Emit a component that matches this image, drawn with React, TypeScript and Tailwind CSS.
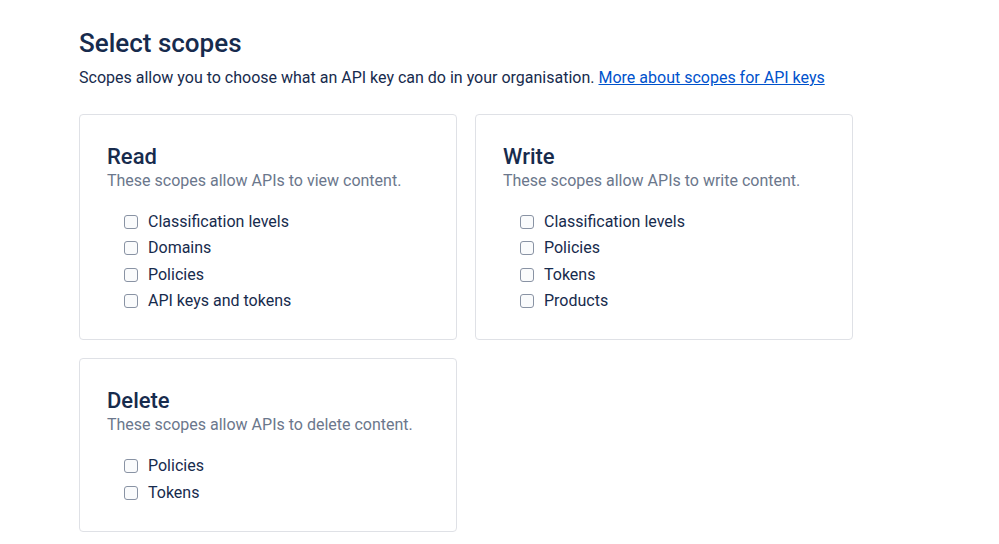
const read = ["Classification levels", "Domains", "Policies", "API keys and tokens"];
const write = ["Classification levels", "Policies", "Tokens", "Products"];
const del = ["Policies", "Tokens"];

function ScopeCard({ title, hint, items }: { title: string; hint: string; items: string[] }) {
  return (
    <div className="rounded-[4px] border border-[#dfe1e6] bg-white pl-[27px] pr-7 pt-7 pb-[25px]">
      <h2 className="text-[22px] leading-[28px] font-medium text-[#172b4d]">{title}</h2>
      <p className="text-[16px] leading-[20px] text-[#6b778c]">{hint}</p>
      <div className="mt-[18px] pl-[17px]">
        {items.map((item) => (
          <label key={item} className="flex h-[26.3px] items-center gap-[10px] text-[16px] text-[#172b4d]">
            <span className="h-[14px] w-[14px] rounded-[3px] border-[1.5px] border-[#8993a4] bg-[#fafbfc]" />
            {item}
          </label>
        ))}
      </div>
    </div>
  );
}

export default function App() {
  return (
    <div className="min-h-screen bg-white pl-[79px] pt-[27px] font-['Roboto',sans-serif] text-[#172b4d]">
      <h1 className="text-[26px] leading-[32px] font-medium">Select scopes</h1>
      <p className="mt-[9px] text-[16px] leading-[20px]">
        Scopes allow you to choose what an API key can do in your organisation.{" "}
        <a href="#" className="text-[#0052cc] underline">
          More about scopes for API keys
        </a>
      </p>
      <div className="mt-[26px] grid w-[774px] grid-cols-2 gap-[18px]">
        <ScopeCard title="Read" hint="These scopes allow APIs to view content." items={read} />
        <ScopeCard title="Write" hint="These scopes allow APIs to write content." items={write} />
        <ScopeCard title="Delete" hint="These scopes allow APIs to delete content." items={del} />
      </div>
    </div>
  );
}
